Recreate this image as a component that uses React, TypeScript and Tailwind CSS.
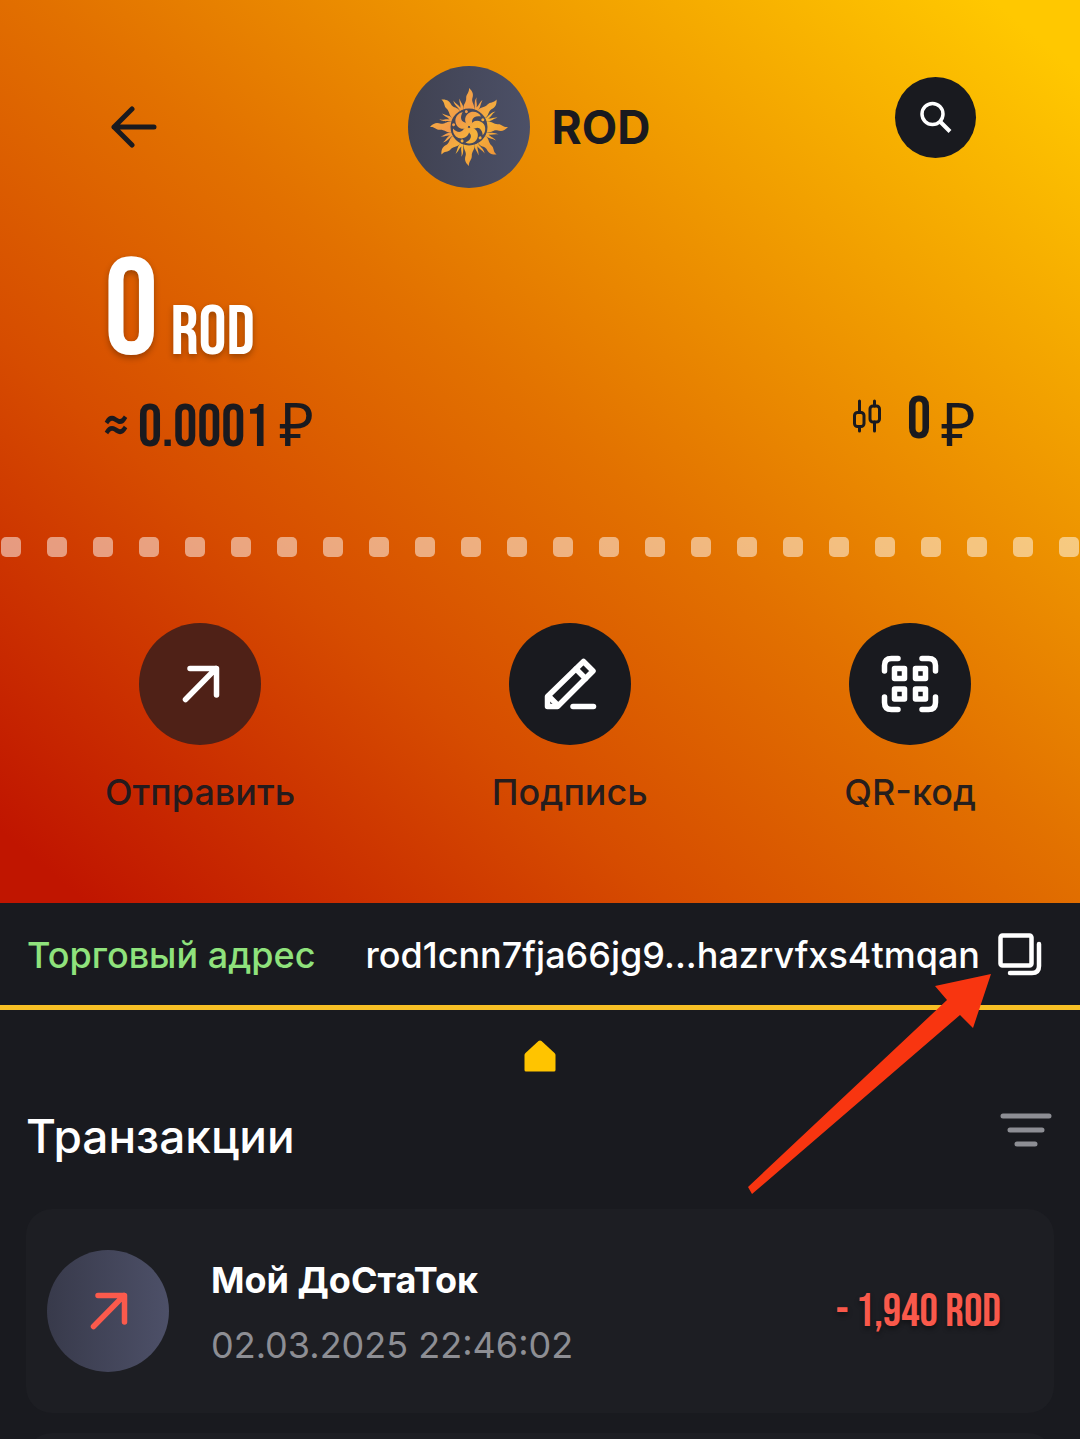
import React from "react";

const CONDENSED = "font-['Bebas_Neue','Liberation_Sans_Narrow','Liberation_Sans',sans-serif] font-normal";
const ROUBLE = "font-['Noto_Sans',sans-serif] text-[60px] font-normal";

function SunLogo() {
  const major = [0, 45, 90, 135, 180, 225, 270, 315];
  const minor = [22, 67, 112, 157, 202, 247, 292, 337];
  const blades = [0, 72, 144, 216, 288];
  return (
    <svg viewBox="-40 -40 80 80" className="size-20" aria-hidden="true">
      <defs>
        <linearGradient id="sun" gradientUnits="userSpaceOnUse" x1="-30" y1="-30" x2="30" y2="30">
          <stop offset="0" stopColor="#f6b23c" />
          <stop offset="0.35" stopColor="#f29a4a" />
          <stop offset="0.6" stopColor="#f5b33a" />
          <stop offset="1" stopColor="#ee9138" />
        </linearGradient>
        <mask id="rays" maskUnits="userSpaceOnUse" x="-40" y="-40" width="80" height="80">
          {major.map((a) => (
            <path
              key={a}
              transform={`rotate(${a})`}
              fill="#fff"
              d="M-5 -17 C-7 -22 -2.500 -24 -2.800 -29 C-3 -33 0.500 -34 0 -39 C4.500 -35 4.500 -32 3.200 -28 C2.600 -24 6 -23 5 -17 Z"
            />
          ))}
          {minor.map((a) => (
            <path
              key={a}
              transform={`rotate(${a})`}
              fill="#fff"
              d="M-2 -18 C-1.500 -22 -5.500 -25 -4 -30.500 C-3.400 -26 -0.800 -25 -0.400 -21 C1.400 -24 0.200 -26 2.400 -30 C2 -25 3.600 -22 2 -18 Z"
            />
          ))}
          <circle r="18.500" fill="#000" />
          {blades.map((a) => (
            <g key={a} transform={`rotate(${a})`} fill="#fff">
              <path d="M-0.500 -1 C-6 -5 -4.500 -13 2 -15 C6 -16 10.500 -14 12 -10.500 C8 -11.500 4 -10.500 3.200 -7 C2.800 -4.500 3.600 -3 1.500 -1 Z" />
              <circle cx="13.800" cy="-7.200" r="1.500" />
            </g>
          ))}
        </mask>
      </defs>
      <rect x="-40" y="-40" width="80" height="80" fill="url(#sun)" mask="url(#rays)" />
    </svg>
  );
}

function ArrowUpRight({ className }: { className: string }) {
  return (
    <svg viewBox="0 0 40 40" className={className} fill="none" stroke="currentColor" strokeWidth="5.500" strokeLinecap="round" strokeLinejoin="round" aria-hidden="true">
      <path d="M5.500 35.500L36 4.500M10 4.500H36.500V31" />
    </svg>
  );
}

function PencilIcon() {
  return (
    <svg viewBox="0 0 54 54" className="size-[54px]" fill="none" stroke="currentColor" strokeWidth="5.500" strokeLinejoin="round" strokeLinecap="round" aria-hidden="true">
      <path d="M4.500 49.500V39.500L40.500 4.500L50 14L14.500 49.500Z" />
      <path d="M33 12L42.500 21.500M5.500 39L15 48.500" />
      <path d="M30 49.500H50.500" />
    </svg>
  );
}

function QrIcon() {
  return (
    <svg viewBox="0 0 58 58" className="size-[58px]" fill="none" stroke="currentColor" strokeWidth="5.500" strokeLinecap="round" strokeLinejoin="round" aria-hidden="true">
      <path d="M3.500 16V10.500Q3.500 3.500 10.500 3.500H17M41 3.500H47.500Q54.500 3.500 54.500 10.500V16M3.500 42V47.500Q3.500 54.500 10.500 54.500H17M41 54.500H47.500Q54.500 54.500 54.500 47.500V42" />
      <path d="M13.500 13.500H23.500V23.500H13.500ZM34.500 13.500H44.500V23.500H34.500ZM13.500 34H23.500V44H13.500ZM34.500 34H44.500V44H34.500Z" />
    </svg>
  );
}

function Action({ label, dim, children }: { label: string; dim?: boolean; children: React.ReactNode }) {
  return (
    <button type="button" className="flex flex-col items-center gap-[26px] text-[36px] font-medium leading-[42px] text-[#1a1a1f]/95">
      <span
        className={
          "flex size-[122px] items-center justify-center rounded-full text-white " +
          (dim ? "bg-[#4f2117]" : "bg-[#191a1f]")
        }
      >
        {children}
      </span>
      {label}
    </button>
  );
}

export default function App() {
  return (
    <main className="flex h-screen min-h-0 flex-col overflow-hidden bg-[#191a1f] font-['Inter','Noto_Sans',sans-serif] text-white">
      <section className="shrink-0 bg-[linear-gradient(to_top_right,#c01500_4%,#d64c00_31%,#e27100_52%,#ffc800_96%)] pb-[90px] pt-[66px] text-[#1a1a1f]">
        <header className="flex items-center justify-between pl-[105px] pr-[104px]">
          <button type="button" aria-label="Назад" className="flex size-[58px] items-center justify-center">
            <svg viewBox="0 0 46 42" className="h-[42px] w-[46px]" fill="none" stroke="currentColor" strokeWidth="5" strokeLinecap="round" strokeLinejoin="round" aria-hidden="true">
              <path d="M21 3L3 21L21 39M3 21H43" />
            </svg>
          </button>
          <div className="flex items-center gap-[22px]">
            <span className="flex size-[122px] items-center justify-center rounded-full bg-linear-to-r from-[#404252] to-[#4c5067]">
              <SunLogo />
            </span>
            <h1 className="text-[46px] font-bold leading-[56px]">ROD</h1>
          </div>
          <button type="button" aria-label="Поиск" className="mb-5 flex size-[81px] items-center justify-center rounded-full bg-[#191a1f] text-white">
            <svg viewBox="0 0 32 32" className="size-8" fill="none" stroke="currentColor" strokeWidth="3.500" aria-hidden="true">
              <circle cx="12.500" cy="13" r="10.500" />
              <path d="M20 20.500L30 30.500" strokeWidth="4" />
            </svg>
          </button>
        </header>

        <div className="flex flex-col gap-[11px] px-[104px] pt-[58px] leading-none">
          <p className={`${CONDENSED} flex items-baseline gap-[12px] text-white [text-shadow:0_3px_6px_rgba(0,0,0,0.3)]`}>
            <span className="text-[136px]">0</span>
            <span className="text-[70px]">ROD</span>
          </p>
          <div className="flex items-start justify-between">
            <p className={`${CONDENSED} flex items-baseline gap-[10px]`}>
              <span className="text-[60px]">≈</span>
              <span className="text-[60px]">0.0001</span>
              <span className={ROUBLE}>₽</span>
            </p>
            <p className={`${CONDENSED} flex items-start gap-[10px]`}>
              <svg viewBox="0 -6 28 46" className="mr-4 h-[46px] w-7" fill="none" stroke="currentColor" strokeWidth="3" strokeLinecap="round" aria-hidden="true">
                <rect x="1.500" y="13.500" width="9.500" height="14" rx="3" />
                <rect x="17" y="7" width="9.500" height="16" rx="3" />
                <path d="M6.500 2V13M6.500 28V32M21.500 2V7M21.500 23V32" />
              </svg>
              <span className="text-[60px] leading-[54px]">0</span>
              <span className={ROUBLE}>₽</span>
            </p>
          </div>
        </div>

        <div className="mt-[79px] flex justify-between px-px" aria-hidden="true">
          {Array.from({ length: 24 }, (_, i) => (
            <span key={i} className="size-5 rounded-[5px] bg-white/50" />
          ))}
        </div>

        <div className="mt-[66px] flex justify-between pl-[105px] pr-[104px]">
          <Action label="Отправить" dim>
            <ArrowUpRight className="size-10" />
          </Action>
          <Action label="Подпись">
            <PencilIcon />
          </Action>
          <Action label="QR-код">
            <QrIcon />
          </Action>
        </div>
      </section>

      <section className="relative flex shrink-0 items-center justify-between border-b-[5px] border-[#f7c025] px-[27px] pb-7 pt-[30px] text-[36px] font-medium leading-[44px]">
        <h2 className="text-[#8fe27c]">Торговый адрес</h2>
        <div className="flex items-center gap-[18px] pr-[11px]">
          <span>rod1cnn7fja66jg9...hazrvfxs4tmqan</span>
          <button type="button" aria-label="Копировать адрес">
            <svg viewBox="0 0 44 44" className="size-11" fill="none" stroke="currentColor" strokeWidth="4.500" strokeLinecap="round" strokeLinejoin="round" aria-hidden="true">
              <rect x="2.500" y="2.500" width="31" height="30" rx="2" />
              <path d="M41 11V33Q41 40 34 40H12" />
            </svg>
          </button>
        </div>
        <svg viewBox="748 974 243 220" className="absolute right-[89px] top-[71px] z-10 h-[220px] w-[243px]" aria-hidden="true">
          <path fill="#f83510" d="M991 974L935 986L947 1000L748 1187L752 1194L960 1015L973 1028Z" />
        </svg>
      </section>

      <section className="flex min-h-0 flex-1 flex-col px-[26px] pt-[30px]">
        <svg viewBox="0 0 32 32" className="size-8 shrink-0 self-center" aria-hidden="true">
          <path fill="#ffc400" d="M14.500 1Q16 0 17.500 1L30.500 13Q31.500 14 31.500 15V30Q31.500 31.500 30 31.500H2Q0.500 31.500 0.500 30V15Q0.500 14 1.500 13Z" />
        </svg>
        <div className="mt-9 flex items-center justify-between">
          <h2 className="text-[46px] font-medium leading-[56px]">Транзакции</h2>
          <button type="button" aria-label="Фильтр" className="mb-3 mr-[2px] text-[#8d8e94]">
            <svg viewBox="0 0 52 34" className="h-[34px] w-[52px]" fill="none" stroke="currentColor" strokeWidth="5" strokeLinecap="round" aria-hidden="true">
              <path d="M3 3H49M10 17H42M17 31H35" />
            </svg>
          </button>
        </div>
        <ul className="mt-[45px] flex flex-col gap-5">
          <li className="flex items-center rounded-[26px] bg-[#1d1e23] py-[41px] pl-[21px] pr-[53px]">
            <span className="flex size-[122px] items-center justify-center rounded-full bg-linear-to-r from-[#383a4b] to-[#4d5068] text-[#fb5a4c]">
              <ArrowUpRight className="size-10" />
            </span>
            <div className="ml-[42px] flex flex-col gap-[21px] pt-[3px] text-[36px] leading-[44px]">
              <h3 className="font-bold">Мой ДоСтаТок</h3>
              <time className="text-[#8d8e94]">02.03.2025 22:46:02</time>
            </div>
            <p className={`${CONDENSED} ml-auto pt-1 text-[46px] leading-[52px] text-[#f9594b] [text-shadow:0_3px_5px_rgba(0,0,0,0.4)]`}>
              - 1,940 ROD
            </p>
          </li>
          <li className="h-[204px] rounded-[26px] bg-[#1d1e23]" />
        </ul>
      </section>
    </main>
  );
}
